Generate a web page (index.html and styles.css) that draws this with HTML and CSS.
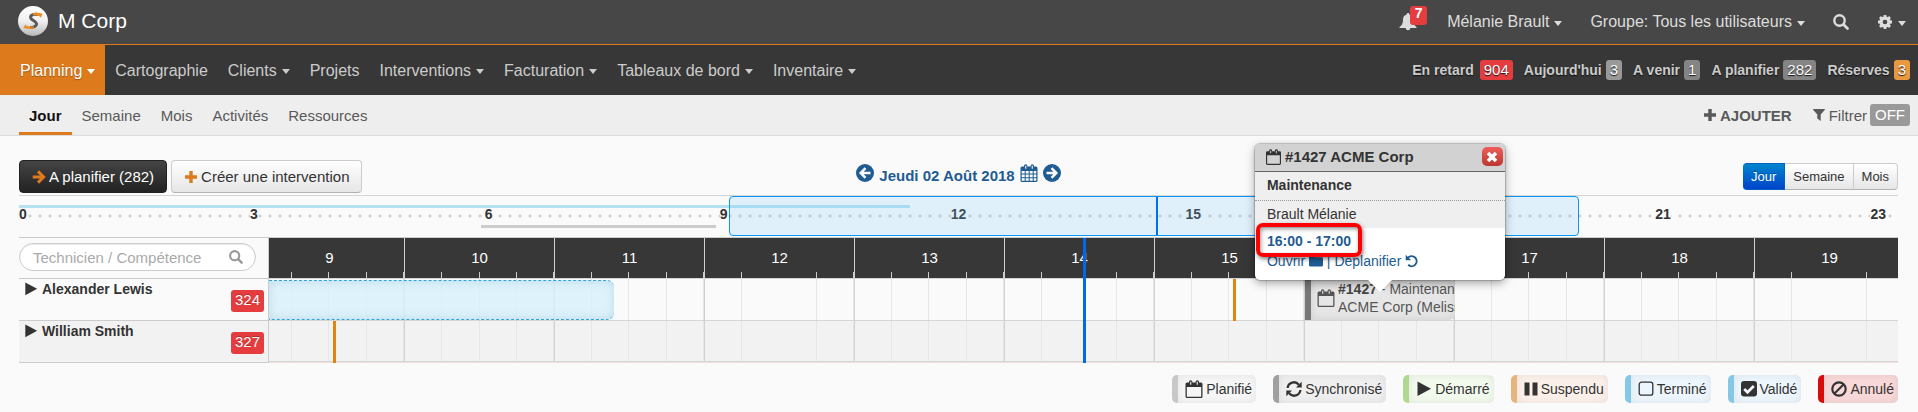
FILE: index.html
```html
<!DOCTYPE html>
<html lang="fr">
<head>
  <meta charset="UTF-8">
  <meta name="viewport" content="width=device-width, initial-scale=1.0">
  <title>M Corp - Planning</title>
  <link rel="stylesheet" href="styles.css">
</head>
<body>

<!-- Icon sprite -->
<svg class="sprite" aria-hidden="true">
  <symbol id="i-calendar" viewBox="0 0 17 18"><path fill-rule="evenodd" d="M1.5 2.5h2V2a1.7 1.7 0 0 1 3.4 0v.5h3.2V2a1.7 1.7 0 0 1 3.4 0v.5h2A1.5 1.5 0 0 1 17 4v12.5a1.5 1.5 0 0 1-1.5 1.5h-14A1.5 1.5 0 0 1 0 16.500V4a1.500 1.500 0 0 1 1.500-1.500zM1.300 7v9.700h14.400V7zM4.700 1.800v2.900h1.100V1.800zm6.500 0v2.900h1.100V1.800z"/></symbol>
  <symbol id="i-grid" viewBox="0 0 17 18"><path fill-rule="evenodd" d="M1.500 2.500h2V2a1.700 1.700 0 0 1 3.400 0v.5h3.200V2a1.700 1.700 0 0 1 3.400 0v.5h2A1.500 1.500 0 0 1 17 4v12.500a1.500 1.500 0 0 1-1.500 1.500h-14A1.500 1.500 0 0 1 0 16.500V4a1.500 1.500 0 0 1 1.500-1.500zM1.200 7v2.500h3V7zm4 0v2.500h3V7zm4 0v2.500h3V7zm4 0v2.500h2.600V7zm-12 3.500v2.700h3v-2.700zm4 0v2.700h3v-2.700zm4 0v2.700h3v-2.700zm4 0v2.700h2.600v-2.700zm-12 3.700v2.600h3v-2.600zm4 0v2.600h3v-2.600zm4 0v2.600h3v-2.600zm4 0v2.600h2.600v-2.600zM4.700 1.800v2.900h1.100V1.800zm6.500 0v2.900h1.100V1.800z"/></symbol>
  <symbol id="i-search" viewBox="0 0 16 16"><circle cx="6.500" cy="6.500" r="5.200" fill="none" stroke="currentColor" stroke-width="2.400"/><path d="M10.500 10.500l4 4" stroke="currentColor" stroke-width="2.700" stroke-linecap="round"/></symbol>
  <symbol id="i-gear" viewBox="0 0 16 16"><path d="M8 1v14M1 8h14M3 3l10 10M13 3L3 13" stroke="currentColor" stroke-width="2.800"/><circle cx="8" cy="8" r="4" fill="none" stroke="currentColor" stroke-width="3.400"/><circle class="hub" cx="8" cy="8" r="2.300"/></symbol>
  <symbol id="i-bell" viewBox="0 0 18 18"><path d="M9 0a1.200 1.200 0 0 1 1.200 1.500C12.800 2 14 4 14 6.500c0 4.200 1.300 6 3.500 7.500v1H11.300a2.300 2.300 0 0 1-4.600 0H.5v-1C2.700 12.500 4 10.700 4 6.500 4 4 5.200 2 7.800 1.500A1.200 1.200 0 0 1 9 0z"/></symbol>
  <symbol id="i-plus" viewBox="0 0 14 14"><path d="M5.300 1h3.400v4.300H13v3.400H8.700V13H5.300V8.700H1V5.300h4.300z"/></symbol>
  <symbol id="i-arrow" viewBox="0 0 14 14"><path d="M.7 7h11M6 1.400L11.600 7 6 12.600" fill="none" stroke="currentColor" stroke-width="3"/></symbol>
  <symbol id="i-filter" viewBox="0 0 12 14"><path d="M.7 1h10.600c.6 0 .8.600.4 1L7.700 6.500V13L4.300 10.500v-4L.3 2C-.1 1.600.1 1 .7 1z"/></symbol>
  <symbol id="i-prev" viewBox="0 0 18 18"><circle cx="9" cy="9" r="9"/><path d="M14.500 9h-9M9.500 4.200L4.700 9l4.800 4.800" fill="none" stroke="#fafafa" stroke-width="2.500"/></symbol>
  <symbol id="i-next" viewBox="0 0 18 18"><circle cx="9" cy="9" r="9"/><path d="M3.500 9h9M8.500 4.200L13.300 9l-4.800 4.800" fill="none" stroke="#fafafa" stroke-width="2.500"/></symbol>
  <symbol id="i-close" viewBox="0 0 12 12"><path d="M2 2l8 8M10 2l-8 8" stroke="currentColor" stroke-width="3.600"/></symbol>
  <symbol id="i-folder" viewBox="0 0 14 12"><path d="M1.500 1h3.300c.8 0 1.200.500 1.200 1.200h6.500c.9 0 1.500.6 1.500 1.500V10c0 .9-.6 1.500-1.500 1.500h-11C.600 11.500 0 10.900 0 10V2.500C0 1.600.6 1 1.500 1z"/></symbol>
  <symbol id="i-undo" viewBox="0 0 14 14"><path d="M3 3.700A5 5 0 1 1 3.200 10.800" fill="none" stroke="currentColor" stroke-width="2"/><path d="M.7.800v5.400h5.400z"/></symbol>
  <symbol id="i-sync" viewBox="0 0 16 16"><path d="M1.600 7A6.300 6.300 0 0 1 12.800 3.700M14.400 9A6.300 6.300 0 0 1 3.200 12.300" fill="none" stroke="currentColor" stroke-width="2.300"/><path d="M15.700.800v5.700H10zM.3 15.200V9.500H6z"/></symbol>
  <symbol id="i-play" viewBox="0 0 14 16"><path d="M.5.600L14 7.800.5 15z"/></symbol>
  <symbol id="i-pause" viewBox="0 0 14 14"><path d="M.5.500h5v13h-5zM8.500.500h5v13h-5z"/></symbol>
  <symbol id="i-square" viewBox="0 0 16 16"><rect x="1.200" y="1.200" width="13.600" height="13" rx="2.300" fill="none" stroke="currentColor" stroke-width="1.300"/></symbol>
  <symbol id="i-check" viewBox="0 0 16 16"><rect x="0" y="0" width="16" height="15.500" rx="3"/><path d="M3.200 8l3.300 3.300 6.300-6.300" fill="none" stroke="#f0f6fc" stroke-width="2.700"/></symbol>
  <symbol id="i-ban" viewBox="0 0 16 16"><circle cx="8" cy="8" r="6.700" fill="none" stroke="currentColor" stroke-width="2.200"/><path d="M3.500 12.500l9-9" stroke="currentColor" stroke-width="2.200"/></symbol>
</svg>

<header class="topbar">
  <a class="brand" href="#">
    <svg class="logo" viewBox="0 0 30 30" aria-hidden="true">
      <defs><linearGradient id="ball" x1="0" y1="0" x2="0" y2="1"><stop offset="0" stop-color="#ffffff"/><stop offset=".5" stop-color="#f0f0f0"/><stop offset="1" stop-color="#b8b8b8"/></linearGradient></defs>
      <circle cx="15" cy="15" r="15" fill="url(#ball)"/>
      <path d="M20 8.500C15 7.500 11.500 9.500 13 12.500c1 1.800 5 2.500 5.500 5 .4 2.500-3 4-6.500 4" fill="none" stroke="#5a5a5a" stroke-width="3"/>
      <path d="M15 7.300c3-.8 6-.5 9.500.5l-1.500 4c-1.500-2.200-4-3-8-2.300z" fill="#ee8a1d"/>
      <path d="M16 22.300c-3 .9-6 .7-10.500-.3l1.800-3.600c1.500 1.900 4.200 2.700 8.200 1.900z" fill="#ee8a1d"/>
    </svg>
    M Corp
  </a>
  <nav class="user-nav">
    <a href="#" class="bell" aria-label="Notifications"><svg class="icon i18"><use href="#i-bell"/></svg><span class="count">7</span></a>
    <a href="#">Mélanie Brault<i class="caret"></i></a>
    <a href="#">Groupe: Tous les utilisateurs<i class="caret"></i></a>
    <a href="#" aria-label="Rechercher"><svg class="icon i16"><use href="#i-search"/></svg></a>
    <a href="#" aria-label="Paramètres"><svg class="icon i16"><use href="#i-gear"/></svg><i class="caret"></i></a>
  </nav>
</header>

<div class="navbar">
  <nav class="main-nav">
    <a class="active" href="#">Planning<i class="caret"></i></a>
    <a href="#">Cartographie</a>
    <a href="#">Clients<i class="caret"></i></a>
    <a href="#">Projets</a>
    <a href="#">Interventions<i class="caret"></i></a>
    <a href="#">Facturation<i class="caret"></i></a>
    <a href="#">Tableaux de bord<i class="caret"></i></a>
    <a href="#">Inventaire<i class="caret"></i></a>
  </nav>
  <nav class="stats">
    <a href="#">En retard <span class="badge red wide">904</span></a>
    <a href="#">Aujourd'hui <span class="badge light">3</span></a>
    <a href="#">A venir <span class="badge">1</span></a>
    <a href="#">A planifier <span class="badge">282</span></a>
    <a href="#">Réserves <span class="badge orange">3</span></a>
  </nav>
</div>

<div class="subbar">
  <nav class="tabs">
    <a class="active" href="#">Jour</a>
    <a href="#">Semaine</a>
    <a href="#">Mois</a>
    <a href="#">Activités</a>
    <a href="#">Ressources</a>
  </nav>
  <div class="sub-actions">
    <a class="add" href="#"><svg class="icon i14"><use href="#i-plus"/></svg>AJOUTER</a>
    <a href="#"><svg class="icon i14"><use href="#i-filter"/></svg>Filtrer <span class="off">OFF</span></a>
  </div>
</div>

<main class="content">
  <div class="toolbar">
    <div class="buttons">
      <button class="btn dark"><svg class="icon i14"><use href="#i-arrow"/></svg>A planifier (282)</button>
      <button class="btn"><svg class="icon i14"><use href="#i-plus"/></svg>Créer une intervention</button>
    </div>
    <div class="date-nav">
      <a href="#" aria-label="Jour précédent"><svg class="icon i18"><use href="#i-prev"/></svg></a>
      <a href="#">Jeudi 02 Août 2018</a>
      <a href="#" aria-label="Calendrier"><svg class="icon i18"><use href="#i-grid"/></svg></a>
      <a href="#" aria-label="Jour suivant"><svg class="icon i18"><use href="#i-next"/></svg></a>
    </div>
    <div class="view-switch">
      <div class="group">
        <button class="active">Jour</button><button>Semaine</button><button>Mois</button>
      </div>
    </div>
  </div>

  <div class="overview">
    <div class="load"></div>
    <div class="load grey"></div>
    <div class="scale">
      <span><b>0</b></span>
      <span><b>3</b></span>
      <span><b>6</b></span>
      <span><b>9</b></span>
      <span><b>12</b></span>
      <span><b>15</b></span>
      <span><b>18</b></span>
      <span><b>21</b></span>
      <span><b>23</b></span>
    </div>
    <div class="window"></div>
    <div class="window-now"></div>
  </div>

  <div class="planning">
    <div class="row head">
      <div class="side">
        <label class="search">
          <input type="text" placeholder="Technicien / Compétence" aria-label="Technicien / Compétence">
          <svg class="icon i14"><use href="#i-search"/></svg>
        </label>
      </div>
      <div class="lane">
        <div class="hours">
          <div>9</div><div>10</div><div>11</div><div>12</div><div>13</div><div>14</div><div>15</div><div>16</div><div>17</div><div>18</div><div>19</div>
        </div>
      </div>
    </div>

    <div class="row">
      <div class="side">
        <a class="tech" href="#"><svg class="icon i14"><use href="#i-play"/></svg>Alexander Lewis</a>
        <span class="late">324</span>
      </div>
      <div class="lane">
        <div class="hours">
          <div></div><div></div><div></div><div></div><div></div><div></div><div></div><div></div><div></div><div></div><div></div>
        </div>
        <div class="absence"></div>
        <div class="mark mark-a"></div>
        <div class="slot">
          <div class="event">
            <svg class="icon i18"><use href="#i-calendar"/></svg>
            <div class="event-text"><b>#1427</b> - Maintenance<br>ACME Corp (Melissa)</div>
          </div>
          <div class="popover">
            <div class="pop-head">
              <svg class="icon i15"><use href="#i-calendar"/></svg>#1427 ACME Corp
              <button class="close" aria-label="Fermer"><svg class="icon i12"><use href="#i-close"/></svg></button>
            </div>
            <div class="pop-type">Maintenance</div>
            <div class="pop-tech">Brault Mélanie</div>
            <div class="pop-body">
              <a class="time" href="#">16:00 - 17:00</a>
              <div class="links"><a href="#">Ouvrir <svg class="icon i14"><use href="#i-folder"/></svg></a> | <a href="#">Déplanifier <svg class="icon i14"><use href="#i-undo"/></svg></a></div>
            </div>
          </div>
        </div>
      </div>
    </div>

    <div class="row alt">
      <div class="side">
        <a class="tech" href="#"><svg class="icon i14"><use href="#i-play"/></svg>William Smith</a>
        <span class="late">327</span>
      </div>
      <div class="lane">
        <div class="hours">
          <div></div><div></div><div></div><div></div><div></div><div></div><div></div><div></div><div></div><div></div><div></div>
        </div>
        <div class="mark mark-b"></div>
      </div>
    </div>

    <div class="now-layer"><div class="now"></div></div>
  </div>

  <div class="legend">
    <span class="key planned"><svg class="icon i18"><use href="#i-calendar"/></svg>Planifié</span>
    <span class="key synced"><svg class="icon i16"><use href="#i-sync"/></svg>Synchronisé</span>
    <span class="key started"><svg class="icon i16"><use href="#i-play"/></svg>Démarré</span>
    <span class="key paused"><svg class="icon i14"><use href="#i-pause"/></svg>Suspendu</span>
    <span class="key done"><svg class="icon i16"><use href="#i-square"/></svg>Terminé</span>
    <span class="key done"><svg class="icon i16"><use href="#i-check"/></svg>Validé</span>
    <span class="key cancelled"><svg class="icon i16"><use href="#i-ban"/></svg>Annulé</span>
  </div>
</main>

</body>
</html>
```
FILE: styles.css
```css
* {
  box-sizing: border-box;
}
body {
  margin: 0;
  background: #fafafa;
  color: #333;
  font-family: "Liberation Sans", Arial, sans-serif;
  font-size: 14px;
}
a {
  color: inherit;
  text-decoration: none;
}
button, input {
  font-family: inherit;
}
.sprite {
  position: absolute;
  width: 0;
  height: 0;
}
.icon {
  flex: none;
  fill: currentColor;
}
.i12 { width: 12px; height: 12px; }
.i14 { width: 14px; height: 14px; }
.i15 { width: 15px; height: 16px; }
.i16 { width: 16px; height: 16px; }
.i18 { width: 18px; height: 18px; }
.caret {
  display: inline-block;
  width: 8px;
  margin-left: 5px;
  border: 4px solid transparent;
  border-top: 5px solid currentColor;
  border-bottom: 0;
  vertical-align: 2px;
}

/* Top bar */
.topbar {
  display: flex;
  justify-content: space-between;
  height: 45px;
  padding: 0 12px 0 18px;
  background: #474747;
  border-bottom: 1px solid #dd7a1c;
  color: #ddd;
  font-size: 16px;
}
.brand {
  display: flex;
  align-items: center;
  gap: 10px;
  padding-bottom: 2px;
  color: #fff;
  font-size: 21px;
}
.logo {
  width: 30px;
  height: 30px;
}
.user-nav {
  display: flex;
  align-items: center;
  gap: 28px;
}
.user-nav a {
  display: flex;
  align-items: center;
  position: relative;
}
.user-nav .caret {
  margin: 2px 0 0 5px;
}
.bell {
  margin-right: 2px;
}
.hub {
  fill: #474747;
}
.count {
  position: absolute;
  left: 11px;
  top: -7px;
  width: 17px;
  height: 19px;
  border-radius: 3px;
  background: #e43c3f;
  color: #fff;
  font-size: 14px;
  font-weight: bold;
  line-height: 15px;
  text-align: center;
}

/* Main navigation */
.navbar {
  display: flex;
  justify-content: space-between;
  height: 50px;
  background: #373737;
  color: #ccc;
}
.main-nav {
  display: flex;
  font-size: 16px;
}
.main-nav a {
  padding: 0 10px;
  line-height: 51px;
}
.main-nav a:first-child {
  padding-left: 20px;
}
.main-nav .active {
  background: #dd7a1c;
  color: #fff;
  text-shadow: 0 1px 1px rgba(0, 0, 0, .3);
}
.stats {
  display: flex;
  align-items: center;
  gap: 11px;
  padding-right: 8px;
  font-weight: bold;
  text-shadow: 0 1px 1px #111;
}
.stats a {
  display: flex;
  align-items: center;
  gap: 4px;
}
.badge {
  height: 20px;
  padding: 0 4px;
  border-radius: 3px;
  background: #848484;
  color: #fff;
  font-size: 15px;
  font-weight: normal;
  line-height: 20px;
}
.badge.wide { margin-left: 2px; }
.badge.light { background: #999; }
.badge.red { background: #e43c3f; }
.badge.orange { background: #e8983f; }

/* Secondary navigation */
.subbar {
  display: flex;
  justify-content: space-between;
  height: 41px;
  padding: 0 8px 0 19px;
  background: #eee;
  border-bottom: 1px solid #ddd;
  color: #595959;
  font-size: 15px;
}
.tabs {
  display: flex;
}
.tabs a {
  padding: 0 10px;
  line-height: 42px;
}
.tabs .active {
  border-bottom: 3px solid #dd7a1c;
  color: #111;
  font-weight: bold;
}
.sub-actions {
  display: flex;
  align-items: center;
  gap: 20px;
}
.sub-actions a {
  display: flex;
  align-items: center;
  gap: 3px;
}
.add {
  font-weight: bold;
}
.off {
  padding: 0 5px;
  border-radius: 3px;
  background: #999;
  color: #fff;
  line-height: 22px;
}

/* Toolbar */
.content {
  padding: 24px 20px 0 19px;
}
.toolbar {
  display: flex;
  align-items: flex-start;
  height: 36px;
  border-bottom: 1px solid #d5d5d5;
}
.buttons, .view-switch {
  flex: 1;
  display: flex;
  gap: 4px;
}
.btn {
  display: flex;
  align-items: center;
  gap: 3px;
  height: 33px;
  padding: 0 12px;
  border: 1px solid #ccc;
  border-bottom-color: #b3b3b3;
  border-radius: 4px;
  background: linear-gradient(#fff, #e6e6e6);
  color: #333;
  font-size: 15px;
}
.btn .icon {
  color: #dd7a1c;
}
.btn.dark {
  border-color: #222;
  background: linear-gradient(#444, #222);
  color: #fff;
}
.date-nav {
  display: flex;
  gap: 5px;
  padding-top: 4px;
  color: #1f5c92;
  font-size: 15px;
  font-weight: bold;
  line-height: 24px;
}
.view-switch {
  justify-content: flex-end;
  padding-top: 3px;
}
.group {
  display: flex;
}
.group button {
  height: 27px;
  padding: 0 8px;
  border: 1px solid #ccc;
  border-left-width: 0;
  border-bottom-color: #b3b3b3;
  background: linear-gradient(#fff, #e6e6e6);
  color: #333;
  font-size: 13px;
}
.group button:first-child {
  border-radius: 4px 0 0 4px;
}
.group button:last-child {
  border-radius: 0 4px 4px 0;
}
.group .active {
  border-color: #0560c4;
  background: linear-gradient(#0085cc, #0044cc);
  color: #fff;
  text-shadow: 0 -1px 0 rgba(0, 0, 0, .25);
}

/* 24h overview */
.overview {
  position: relative;
  height: 41px;
}
.load, .window, .window-now {
  position: absolute;
}
.load {
  left: 0;
  top: 9px;
  width: 47.4%;
  height: 3px;
  background: #b5e1f1;
}
.load.grey {
  left: 24.6%;
  top: 29px;
  width: 12.5%;
  background: #ccc;
}
.scale {
  display: flex;
  padding-top: 10px;
  background: radial-gradient(circle, #d0d0d0 1px, transparent 2px) 6px 15px / 10px 10px repeat-x;
  font-size: 14px;
  line-height: 17px;
}
.scale span {
  flex: 2 0 0;
  text-align: center;
}
.scale span:first-child {
  flex: 1 0 0;
  text-align: left;
}
.scale span:last-child {
  flex: 1 0 0;
  text-align: right;
}
.scale span:last-child b {
  margin-right: 12px;
}
.scale b {
  background: #fafafa;
}
.window {
  left: 37.8%;
  top: 0;
  width: 45.2%;
  height: 40px;
  border: 1px solid #0d97f2;
  border-radius: 4px;
  background: rgba(122, 200, 255, .2);
}
.window-now {
  left: 60.5%;
  top: 1px;
  width: 2px;
  height: 38px;
  background: #0070f0;
}

/* Planning grid */
.planning {
  position: relative;
  border-top: 1px solid #ccc;
}
.row {
  display: flex;
  height: 42px;
}
.row.head {
  height: 41px;
}
.side {
  display: flex;
  justify-content: space-between;
  flex: 0 0 250px;
  border-right: 1px solid #ccc;
  border-bottom: 1px solid #ccc;
}
.lane {
  flex: 1;
  min-width: 0;
  position: relative;
  border-bottom: 1px solid #d5d5d5;
}
.alt {
  background: #f2f2f2;
}
.alt .lane {
  border-bottom-color: #f5dede;
}
.alt .hours {
  border-bottom: 1px solid #d5d5d5;
}
/* the first and last hours run past the visible range */
.hours {
  display: grid;
  grid-template-columns: 135fr repeat(9, 150fr) 144fr;
  height: 100%;
  overflow: hidden;
}
.hours div {
  border-left: 1px solid #d0d0d0;
  background: repeating-linear-gradient(90deg, transparent 0 calc(25% - 1px), #e6e6e6 calc(25% - 1px) 25%);
}
.hours div:first-child {
  width: calc(100% + 15px);
  margin-left: -15px;
}
.hours div:last-child {
  width: calc(100% + 6px);
}
.head .hours div {
  background: repeating-linear-gradient(90deg, transparent 0 calc(25% - 1px), #ccc calc(25% - 1px) 25%) 0 100% / 100% 6px no-repeat #373737;
  color: #fff;
  font-size: 15px;
  line-height: 40px;
  text-align: center;
}
.search {
  display: flex;
  align-items: center;
  width: 237px;
  height: 28px;
  margin-top: 5px;
  padding: 0 12px 0 13px;
  border: 1px solid #ccc;
  border-radius: 14px;
  background: #fff;
  box-shadow: inset 0 1px 1px rgba(0, 0, 0, .08);
  color: #999;
}
.search input {
  flex: 1;
  min-width: 0;
  padding: 0;
  border: 0;
  outline: 0;
  background: none;
  font-size: 15px;
}
.search input::placeholder {
  color: #aaa;
}
.tech {
  display: flex;
  align-items: center;
  gap: 4px;
  height: 20px;
  padding-left: 5px;
  font-weight: bold;
}
.late {
  height: 22px;
  margin: 11px 4px 0 0;
  padding: 0 4px;
  border-radius: 3px;
  background: #e43c3f;
  color: #fff;
  font-size: 15px;
  line-height: 20px;
  text-shadow: 0 -1px 0 rgba(0, 0, 0, .25);
}
.absence {
  position: absolute;
  left: 0;
  top: 1px;
  bottom: 0;
  width: 21.2%;
  border: 1px dashed #2fa4dc;
  border-width: 1px 0;
  border-radius: 0 7px 7px 0;
  background: rgba(215, 240, 250, .85);
  box-shadow: inset 0 0 10px rgba(120, 165, 195, .3);
}
.mark {
  position: absolute;
  top: 0;
  bottom: -1px;
  width: 3px;
  background: #df8311;
}
.mark-a { left: 59.2%; }
.mark-b { left: 3.93%; }
.now-layer {
  position: absolute;
  top: 0;
  right: 0;
  bottom: 0;
  left: 250px;
  pointer-events: none;
}
.now {
  width: 3px;
  height: 100%;
  margin-left: 49.97%;
  background: #0068ea;
}

/* Scheduled job */
.slot {
  position: absolute;
  left: 63.6%;
  top: 1px;
  bottom: 0;
  width: 9.2%;
}
.event {
  display: flex;
  align-items: center;
  gap: 3px;
  height: 100%;
  padding: 0 0 4px 6px;
  overflow: hidden;
  border-left: 6px solid #777;
  border-radius: 0 6px 6px 0;
  background: #e6e6e6;
  box-shadow: inset 0 0 8px rgba(0, 0, 0, .1);
  color: #555;
}
.event-text {
  line-height: 18px;
  white-space: nowrap;
}
.event b {
  color: #444;
}
.popover {
  position: absolute;
  z-index: 2;
  bottom: 100%;
  left: 50%;
  width: 250px;
  margin-left: -125px;
  border-radius: 5px;
  background: #fff;
  box-shadow: 0 3px 10px rgba(0, 0, 0, .35), 0 0 1px 1px rgba(0, 0, 0, .2);
}
.popover::after {
  content: "";
  position: absolute;
  top: 100%;
  left: 50%;
  margin-left: -12px;
  border: 12px solid transparent;
  border-top-color: #fff;
  border-bottom: 0;
}
.pop-head {
  display: flex;
  align-items: center;
  gap: 4px;
  height: 28px;
  padding: 0 2px 2px 11px;
  border-bottom: 1px solid #666;
  border-radius: 5px 5px 0 0;
  background: #d2d2d2;
  font-size: 15px;
  font-weight: bold;
}
.close {
  display: flex;
  align-items: center;
  justify-content: center;
  width: 21px;
  height: 19px;
  margin-left: auto;
  padding: 0;
  border: 0;
  border-radius: 5px;
  background: linear-gradient(#ee5f5b, #bd362f);
  color: #fff;
}
.pop-type, .pop-tech {
  padding: 0 12px;
  background: #efefef;
  line-height: 27px;
}
.pop-type {
  height: 29px;
  border-bottom: 1px dotted #999;
  font-weight: bold;
}
.pop-body {
  height: 52px;
  padding: 3px 12px;
  color: #1f5c92;
  line-height: 20px;
}
.time {
  position: relative;
  font-weight: bold;
}
/* highlight around the scheduled time */
.time::after {
  content: "";
  position: absolute;
  inset: -10px -11px -8px -11px;
  border: 4px solid #f00;
  border-radius: 7px;
  box-shadow: 1px 2px 4px rgba(0, 0, 0, .5), inset 1px 2px 4px rgba(0, 0, 0, .4);
}
.links .icon {
  vertical-align: -2px;
}

/* Legend */
.legend {
  display: flex;
  justify-content: flex-end;
  gap: 17px;
  padding: 12px 0 9px;
}
.key {
  display: flex;
  align-items: center;
  gap: 3px;
  height: 28px;
  padding: 0 4px 0 7px;
  border-left: 6px solid #c8c8c8;
  border-radius: 5px;
  background: #f6f6f6;
  box-shadow: inset 0 0 8px rgba(0, 0, 0, .08);
}
.synced { border-color: #a0a0a0; background: #efefef; }
.started { border-color: #b0d890; background: #f2faee; }
.paused { border-color: #e6b47c; background: #fcf1ea; }
.done { border-color: #84c8e6; background: #eef6fd; }
.cancelled { border-color: #d90c0c; background: #f8d8d8; }
```
